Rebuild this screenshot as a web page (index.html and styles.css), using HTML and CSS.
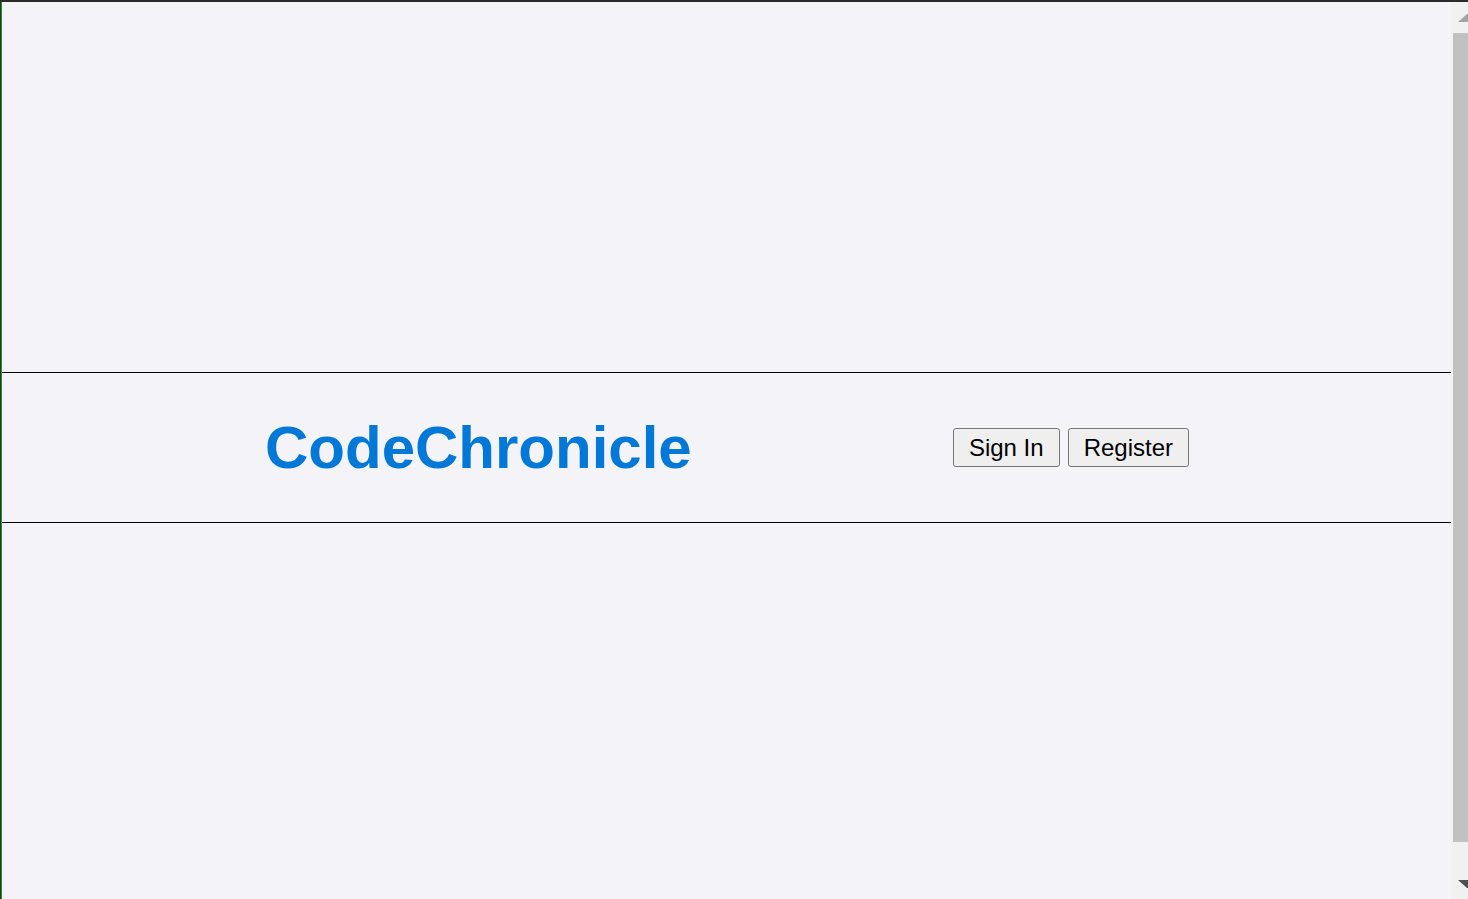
FILE: index.html
```html
<!DOCTYPE html>
<html lang="en">
<head>
<meta charset="utf-8">
<title>CodeChronicle</title>
<link rel="stylesheet" href="styles.css">
</head>
<body>
<div class="page">
  <div class="spacer"></div>
  <header class="site-header">
    <h1 class="logo">CodeChronicle</h1>
    <nav class="auth">
      <button class="btn" type="button">Sign In</button>
      <button class="btn" type="button">Register</button>
    </nav>
  </header>
</div>
<div class="scrollbar" aria-hidden="true">
  <svg class="arrow arrow-up" width="10" height="8" viewBox="0 0 10 8"><polygon points="0,8 10,8 10,0 9,0" fill="#a3a3a3"/></svg>
  <div class="thumb"></div>
  <svg class="arrow arrow-down" width="10" height="8" viewBox="0 0 10 8"><polygon points="0,0 10,0 10,8 9,8" fill="#505050"/></svg>
</div>
</body>
</html>
```

FILE: styles.css
```css
html, body {
  margin: 0;
  padding: 0;
  height: 100%;
  overflow: hidden;
}

body {
  background: #f4f4f8;
  font-family: "Liberation Sans", Arial, sans-serif;
  border-top: 2px solid #2b2b2b;
  box-sizing: border-box;
  box-shadow: inset 1px 0 0 #1f3b22, inset 2px 0 0 #2e8b3a;
}

.page {
  margin-left: 2px;
  margin-right: 17px;
  display: flex;
  flex-direction: column;
}

.spacer {
  height: 370px;
}

.site-header {
  height: 149px;
  border-top: 1px solid #000;
  border-bottom: 1px solid #000;
  display: flex;
  align-items: center;
  justify-content: space-between;
  padding: 0 262px 0 263px;
}

.logo {
  margin: 0;
  font-size: 60px;
  font-weight: bold;
  color: #0078d7;
  line-height: 1;
}

.auth {
  display: flex;
  gap: 8px;
}

.btn {
  font-family: "Liberation Sans", Arial, sans-serif;
  font-size: 24px;
  line-height: 29px;
  padding: 4px 15px;
  color: #000;
  background: #efefef;
  border: 1px solid #767676;
  border-radius: 3px;
}

.scrollbar {
  position: fixed;
  top: 2px;
  right: 0;
  bottom: 0;
  width: 17px;
  background: #f1f1f1;
}

.arrow {
  position: absolute;
  right: 0;
}

.arrow-up {
  top: 12px;
}

.arrow-down {
  bottom: 11px;
}

.thumb {
  position: absolute;
  left: 2px;
  right: 0;
  top: 31px;
  height: 809px;
  background: #c1c1c1;
}
```
